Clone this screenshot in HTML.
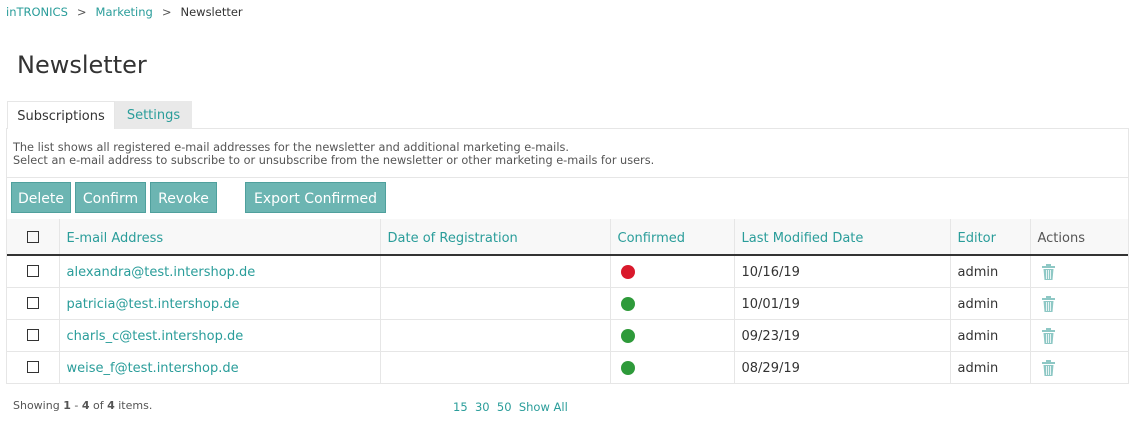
<!DOCTYPE html>
<html><head><style>
body{margin:0;background:#fff;font-family:"DejaVu Sans","Liberation Sans",sans-serif;color:#333;width:1142px;height:424px;overflow:hidden;position:relative}
.a{color:#2a9d9a}
.abs{position:absolute;white-space:nowrap}
.bc{top:5px;left:6px;font-size:11.5px}
.bc .s{margin:0 9px;color:#555}
h1{position:absolute;top:51px;left:17px;margin:0;font-size:24px;font-weight:normal;color:#333}
.tab1{left:7px;top:101px;width:108px;height:28px;border:1px solid #e6e6e6;border-bottom:none;background:#fff;font-size:13px;line-height:29px;text-align:center;box-sizing:border-box}
.tab2{left:115px;top:101px;width:77px;height:28px;background:#e9e9e9;font-size:13px;line-height:29px;text-align:center;color:#2a9d9a}
.panel{left:6px;top:128px;width:1123px;height:256px;border:1px solid #e6e6e6;box-sizing:border-box}
.desc{left:13px;top:141px;font-size:11.3px;line-height:13px;color:#555}
.hr{position:absolute;left:7px;width:1121px;height:1px;background:#e6e6e6}
.btn{position:absolute;top:182px;height:31px;background:#6cb5b2;border:1px solid #4fa09d;box-sizing:border-box;color:#fff;font-size:14px;line-height:32px;text-align:center}
table{position:absolute;left:7px;top:219px;width:1121px;border-collapse:collapse;font-size:13px}
th{height:36px;background:#f8f8f8;font-weight:normal;text-align:left;color:#2a9d9a;border-right:1px solid #e6e6e6;border-bottom:2px solid #333;padding:3px 0 0 7px;box-sizing:border-box}
td{height:32px;border-right:1px solid #e6e6e6;border-bottom:1px solid #e6e6e6;padding:2px 0 0 7px;box-sizing:border-box}
th:last-child,td:last-child{border-right:none}
.cb{display:inline-block;width:12px;height:12px;border:1px solid #333;box-sizing:border-box;vertical-align:middle}
.dot{display:inline-block;width:14px;height:14px;border-radius:50%;vertical-align:middle;margin-left:3px}
.foot{left:13px;top:399px;font-size:11px;color:#555}
.pg{left:453px;top:400px;font-size:11.5px}
</style></head><body>
<div class="abs bc"><span class="a">inTRONICS</span><span class="s">&gt;</span><span class="a">Marketing</span><span class="s">&gt;</span><span>Newsletter</span></div>
<h1>Newsletter</h1>
<div class="abs panel"></div>
<div class="abs tab1">Subscriptions</div>
<div class="abs tab2">Settings</div>
<div class="abs desc">The list shows all registered e-mail addresses for the newsletter and additional marketing e-mails.<br>Select an e-mail address to subscribe to or unsubscribe from the newsletter or other marketing e-mails for users.</div>
<div class="hr" style="top:177px"></div>
<div class="btn" style="left:11px;width:60px">Delete</div>
<div class="btn" style="left:75px;width:71px">Confirm</div>
<div class="btn" style="left:150px;width:67px">Revoke</div>
<div class="btn" style="left:245px;width:141px">Export Confirmed</div>
<table>
<tr><th style="width:52px;padding:0"><span class="cb" style="margin-left:20px"></span></th><th style="width:321px">E-mail Address</th><th style="width:230px">Date of Registration</th><th style="width:124px">Confirmed</th><th style="width:216px">Last Modified Date</th><th style="width:80px">Editor</th><th style="color:#555">Actions</th></tr>
<tr><td style="padding:0"><span class="cb" style="margin-left:20px"></span></td><td class="a">alexandra@test.intershop.de</td><td></td><td><span class="dot" style="background:#d9192c"></span></td><td>10/16/19</td><td>admin</td><td><svg width="13" height="16" viewBox="0 0 13 16" style="vertical-align:middle;margin-left:4px"><rect x="4" y="0" width="5" height="2" fill="#8ec8c5"/><rect x="0" y="2" width="13" height="2" fill="#8ec8c5"/><path d="M1.5 5h10l-1 11h-8z" fill="#8ec8c5"/><path d="M4.5 6v9M6.5 6v9M8.5 6v9" stroke="#fff" stroke-width=".8"/></svg></td></tr>
<tr><td style="padding:0"><span class="cb" style="margin-left:20px"></span></td><td class="a">patricia@test.intershop.de</td><td></td><td><span class="dot" style="background:#2e9a3a"></span></td><td>10/01/19</td><td>admin</td><td><svg width="13" height="16" viewBox="0 0 13 16" style="vertical-align:middle;margin-left:4px"><rect x="4" y="0" width="5" height="2" fill="#8ec8c5"/><rect x="0" y="2" width="13" height="2" fill="#8ec8c5"/><path d="M1.5 5h10l-1 11h-8z" fill="#8ec8c5"/><path d="M4.5 6v9M6.5 6v9M8.5 6v9" stroke="#fff" stroke-width=".8"/></svg></td></tr>
<tr><td style="padding:0"><span class="cb" style="margin-left:20px"></span></td><td class="a">charls_c@test.intershop.de</td><td></td><td><span class="dot" style="background:#2e9a3a"></span></td><td>09/23/19</td><td>admin</td><td><svg width="13" height="16" viewBox="0 0 13 16" style="vertical-align:middle;margin-left:4px"><rect x="4" y="0" width="5" height="2" fill="#8ec8c5"/><rect x="0" y="2" width="13" height="2" fill="#8ec8c5"/><path d="M1.5 5h10l-1 11h-8z" fill="#8ec8c5"/><path d="M4.5 6v9M6.5 6v9M8.5 6v9" stroke="#fff" stroke-width=".8"/></svg></td></tr>
<tr><td style="padding:0"><span class="cb" style="margin-left:20px"></span></td><td class="a">weise_f@test.intershop.de</td><td></td><td><span class="dot" style="background:#2e9a3a"></span></td><td>08/29/19</td><td>admin</td><td><svg width="13" height="16" viewBox="0 0 13 16" style="vertical-align:middle;margin-left:4px"><rect x="4" y="0" width="5" height="2" fill="#8ec8c5"/><rect x="0" y="2" width="13" height="2" fill="#8ec8c5"/><path d="M1.5 5h10l-1 11h-8z" fill="#8ec8c5"/><path d="M4.5 6v9M6.5 6v9M8.5 6v9" stroke="#fff" stroke-width=".8"/></svg></td></tr>
</table>
<div class="abs foot">Showing <b>1</b> - <b>4</b> of <b>4</b> items.</div>
<div class="abs pg a">15&nbsp;&nbsp;30&nbsp;&nbsp;50&nbsp;&nbsp;Show All</div>
</body></html>
